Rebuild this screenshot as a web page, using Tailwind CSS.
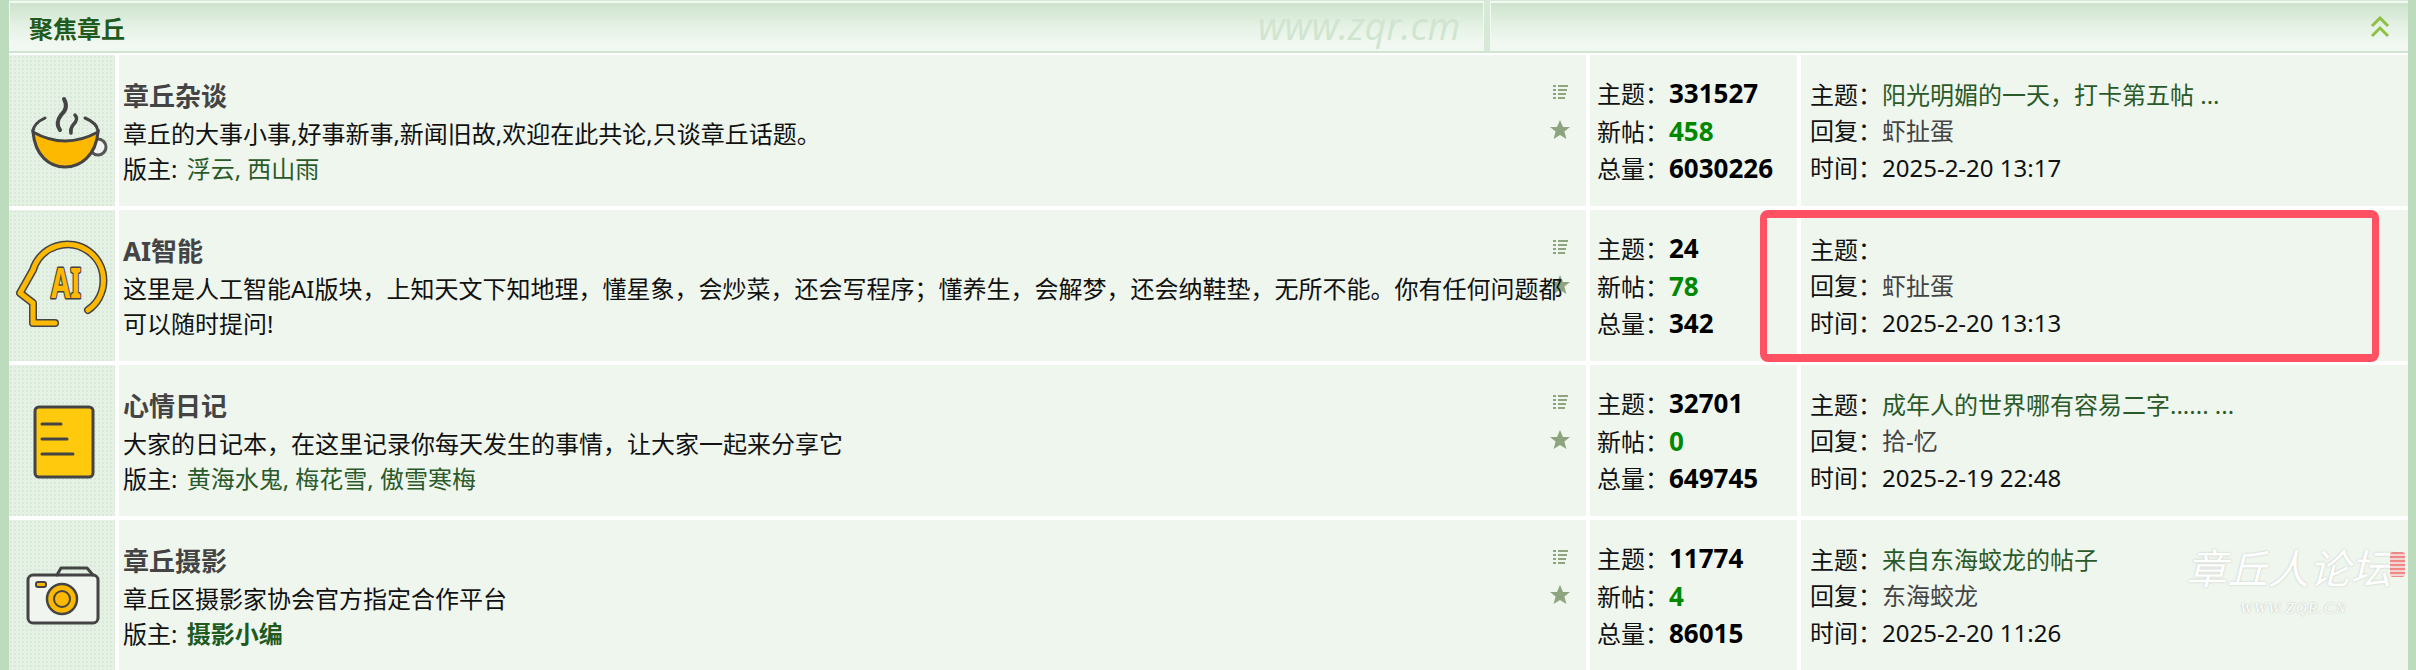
<!DOCTYPE html>
<html lang="zh-CN">
<head>
    <meta charset="UTF-8">
    <title>聚焦章丘</title>
    <script src="https://cdn.jsdelivr.net/npm/@tailwindcss/browser@4"></script>
</head>
<body class="bg-white">
<div class="relative h-[670px] w-[2416px] overflow-hidden border-x-[9px] border-r-[8px] border-[#BDDCBD] bg-white font-['Noto_Sans','Noto_Sans_CJK_SC',sans-serif] text-[24px] leading-[35px] text-[#111]">

    <!-- category header -->
    <div class="relative flex h-[53px] gap-[6px] border-b-2 border-[#CFE5CF] bg-[#D6E9D6] pt-[1px]">
        <div class="flex w-[1475px] items-center border-x border-t-2 border-[#F2F8F2] bg-[linear-gradient(#CFE4CF_5%,#E6F2E6_50%,#F1F8F1_85%)] pl-[19px] pt-[3px] text-[24px] font-bold text-[#1F5A1F]">聚焦章丘</div>
        <div class="flex flex-1 items-center justify-end border-l border-t-2 border-[#F2F8F2] bg-[linear-gradient(#CFE4CF_5%,#E6F2E6_50%,#F1F8F1_85%)] pr-[18px]">
            <svg width="20" height="22" viewBox="0 0 20 22" fill="none" stroke="#8DC044" stroke-width="3"><path d="M2 10 L10 2 L18 10"/><path d="M2 20 L10 12 L18 20"/></svg>
        </div>
        <div class="absolute left-[1249px] top-[6px] font-['Open_Sans',sans-serif] text-[37.500px] italic leading-[40px] text-[#CFE5CF]">www.zqr.cm</div>
    </div>

    <!-- 章丘杂谈 -->
    <div class="mt-[2px] flex h-[151px] gap-[4px]">
        <div class="w-[106px] bg-[#E5F1E5] bg-[radial-gradient(#D8E9D8_1.2px,transparent_1.2px)] [background-size:4px_4px]">
            <svg width="106" height="151" viewBox="0 0 106 151" fill="none" stroke-linecap="round">
                <circle cx="89" cy="92" r="8" stroke="#555" stroke-width="3" fill="#EEF5EE"/>
                <path d="M24 77 Q56 95 89 77 C87 100 72 112 56 112 C40 112 26 100 24 77 Z" fill="#FDB900" stroke="#444" stroke-width="3"/>
                <path d="M24 76 Q25 68 36 63 M76 63 Q88 68 89 76" stroke="#444" stroke-width="3"/>
                <path d="M55 44 Q60 53 52 60 Q46 68 51 75" stroke="#444" stroke-width="4"/>
                <path d="M66 60 Q70 64 64 70 Q61 74 62 78" stroke="#444" stroke-width="3.500"/>
            </svg>
        </div>
        <div class="relative flex w-[1467px] flex-col justify-center bg-[#EFF6EE] pl-[4px] pt-[2px]">
            <svg class="absolute left-[1434px] top-[29px]" width="15" height="16" viewBox="0 0 15 16" fill="#8FA580"><path d="M0 1h3v2H0zM5 1h10v2H5zM0 5h3v2H0zM5 5h9v2H5zM0 9h3v2H0zM5 9h8v2H5zM0 13h3v2H0zM5 13h7v2H5z"/></svg>
            <svg class="absolute left-[1430px] top-[64px]" width="22" height="22" viewBox="0 0 22 22" fill="#8DA47E"><path d="M11 1l3 7h7l-5.600 4.500 2 7.500L11 16l-6.400 4 2-7.500L1 8h7z"/></svg>
            <div class="relative mb-[2px] text-[26px] font-bold leading-[36px] text-[#444]">章丘杂谈</div>
            <div class="relative">章丘的大事小事,好事新事,新闻旧故,欢迎在此共论,只谈章丘话题。</div>
            <div class="relative">版主: <span class="ml-[3px] text-[#2A5A2A]">浮云, 西山雨</span></div>
        </div>
        <div class="flex w-[207px] flex-col justify-center bg-[#EFF6EE] pl-[7px] pt-[2px] leading-[36.500px]">
            <div>主题：<span class="text-[26px] font-bold text-black">331527</span></div>
            <div>新帖：<span class="text-[26px] font-bold text-[#008800]">458</span></div>
            <div>总量：<span class="text-[26px] font-bold text-black">6030226</span></div>
        </div>
        <div class="flex w-[607px] flex-col justify-center bg-[#EFF6EE] pl-[9px] pt-[2px] leading-[36.500px]">
            <div>主题：<span class="text-[#2A5A2A]">阳光明媚的一天，打卡第五帖 ...</span></div>
            <div>回复：<span class="text-[#444]">虾扯蛋</span></div>
            <div>时间：2025-2-20 13:17</div>
        </div>
    </div>

    <!-- AI智能 -->
    <div class="mt-[4px] flex h-[151px] gap-[4px]">
        <div class="w-[106px] bg-[#E5F1E5] bg-[radial-gradient(#D8E9D8_1.2px,transparent_1.2px)] [background-size:4px_4px]">
            <svg width="106" height="151" viewBox="0 0 106 151" fill="none" stroke-linecap="round" stroke-linejoin="round">
                <path d="M79 100 A36 36 0 1 0 24 60 L11 83 L24 93 L24 113 L46 113" stroke="#444" stroke-width="8"/>
                <path d="M79 100 A36 36 0 1 0 24 60 L11 83 L24 93 L24 113 L46 113" stroke="#FDB900" stroke-width="5"/>
                <text x="57" y="88" text-anchor="middle" font-family="Noto Sans" font-weight="700" font-size="42" textLength="30" lengthAdjust="spacingAndGlyphs" fill="#FDB900" stroke="#444" stroke-width="3" paint-order="stroke">AI</text>
            </svg>
        </div>
        <div class="relative flex w-[1467px] flex-col justify-center bg-[#EFF6EE] pl-[4px] pt-[2px]">
            <svg class="absolute left-[1434px] top-[29px]" width="15" height="16" viewBox="0 0 15 16" fill="#8FA580"><path d="M0 1h3v2H0zM5 1h10v2H5zM0 5h3v2H0zM5 5h9v2H5zM0 9h3v2H0zM5 9h8v2H5zM0 13h3v2H0zM5 13h7v2H5z"/></svg>
            <svg class="absolute left-[1430px] top-[64px]" width="22" height="22" viewBox="0 0 22 22" fill="#8DA47E"><path d="M11 1l3 7h7l-5.600 4.500 2 7.500L11 16l-6.400 4 2-7.500L1 8h7z"/></svg>
            <div class="relative mb-[2px] text-[26px] font-bold leading-[36px] text-[#444]">AI智能</div>
            <div class="relative">这里是人工智能AI版块，上知天文下知地理，懂星象，会炒菜，还会写程序；懂养生，会解梦，还会纳鞋垫，无所不能。你有任何问题都<br>可以随时提问!</div>
        </div>
        <div class="flex w-[207px] flex-col justify-center bg-[#EFF6EE] pl-[7px] pt-[2px] leading-[36.500px]">
            <div>主题：<span class="text-[26px] font-bold text-black">24</span></div>
            <div>新帖：<span class="text-[26px] font-bold text-[#008800]">78</span></div>
            <div>总量：<span class="text-[26px] font-bold text-black">342</span></div>
        </div>
        <div class="flex w-[607px] flex-col justify-center bg-[#EFF6EE] pl-[9px] pt-[2px] leading-[36.500px]">
            <div>主题：</div>
            <div>回复：<span class="text-[#444]">虾扯蛋</span></div>
            <div>时间：2025-2-20 13:13</div>
        </div>
    </div>

    <!-- 心情日记 -->
    <div class="mt-[4px] flex h-[151px] gap-[4px]">
        <div class="w-[106px] bg-[#E5F1E5] bg-[radial-gradient(#D8E9D8_1.2px,transparent_1.2px)] [background-size:4px_4px]">
            <svg width="106" height="151" viewBox="0 0 106 151" fill="none" stroke-linecap="round">
                <rect x="26" y="42" width="58" height="70" rx="4" fill="#FFC90E" stroke="#444" stroke-width="3"/>
                <path d="M33 59H52M33 74H58M33 89H64" stroke="#444" stroke-width="3"/>
            </svg>
        </div>
        <div class="relative flex w-[1467px] flex-col justify-center bg-[#EFF6EE] pl-[4px] pt-[2px]">
            <svg class="absolute left-[1434px] top-[29px]" width="15" height="16" viewBox="0 0 15 16" fill="#8FA580"><path d="M0 1h3v2H0zM5 1h10v2H5zM0 5h3v2H0zM5 5h9v2H5zM0 9h3v2H0zM5 9h8v2H5zM0 13h3v2H0zM5 13h7v2H5z"/></svg>
            <svg class="absolute left-[1430px] top-[64px]" width="22" height="22" viewBox="0 0 22 22" fill="#8DA47E"><path d="M11 1l3 7h7l-5.600 4.500 2 7.500L11 16l-6.400 4 2-7.500L1 8h7z"/></svg>
            <div class="relative mb-[2px] text-[26px] font-bold leading-[36px] text-[#444]">心情日记</div>
            <div class="relative">大家的日记本，在这里记录你每天发生的事情，让大家一起来分享它</div>
            <div class="relative">版主: <span class="ml-[3px] text-[#2A5A2A]">黄海水鬼, 梅花雪, 傲雪寒梅</span></div>
        </div>
        <div class="flex w-[207px] flex-col justify-center bg-[#EFF6EE] pl-[7px] pt-[2px] leading-[36.500px]">
            <div>主题：<span class="text-[26px] font-bold text-black">32701</span></div>
            <div>新帖：<span class="text-[26px] font-bold text-[#008800]">0</span></div>
            <div>总量：<span class="text-[26px] font-bold text-black">649745</span></div>
        </div>
        <div class="flex w-[607px] flex-col justify-center bg-[#EFF6EE] pl-[9px] pt-[2px] leading-[36.500px]">
            <div>主题：<span class="text-[#2A5A2A]">成年人的世界哪有容易二字...... ...</span></div>
            <div>回复：<span class="text-[#444]">拾-忆</span></div>
            <div>时间：2025-2-19 22:48</div>
        </div>
    </div>

    <!-- 章丘摄影 -->
    <div class="mt-[4px] flex h-[151px] gap-[4px]">
        <div class="w-[106px] bg-[#E5F1E5] bg-[radial-gradient(#D8E9D8_1.2px,transparent_1.2px)] [background-size:4px_4px]">
            <svg width="106" height="151" viewBox="0 0 106 151" fill="none" stroke-linecap="round" stroke-linejoin="round">
                <rect x="19" y="55" width="70" height="48" rx="5" fill="#F0F5F0" stroke="#444" stroke-width="3"/>
                <path d="M48 55 L52 48 H78 L84 55" stroke="#444" stroke-width="3"/>
                <rect x="27" y="62" width="10" height="5" rx="2" fill="#FDB900" stroke="#444" stroke-width="2"/>
                <circle cx="53" cy="79" r="15" fill="#FDB900" stroke="#444" stroke-width="2.500"/>
                <circle cx="53" cy="79" r="8" fill="#FDB900" stroke="#444" stroke-width="2"/>
            </svg>
        </div>
        <div class="relative flex w-[1467px] flex-col justify-center bg-[#EFF6EE] pl-[4px] pt-[2px]">
            <svg class="absolute left-[1434px] top-[29px]" width="15" height="16" viewBox="0 0 15 16" fill="#8FA580"><path d="M0 1h3v2H0zM5 1h10v2H5zM0 5h3v2H0zM5 5h9v2H5zM0 9h3v2H0zM5 9h8v2H5zM0 13h3v2H0zM5 13h7v2H5z"/></svg>
            <svg class="absolute left-[1430px] top-[64px]" width="22" height="22" viewBox="0 0 22 22" fill="#8DA47E"><path d="M11 1l3 7h7l-5.600 4.500 2 7.500L11 16l-6.400 4 2-7.500L1 8h7z"/></svg>
            <div class="relative mb-[2px] text-[26px] font-bold leading-[36px] text-[#444]">章丘摄影</div>
            <div class="relative">章丘区摄影家协会官方指定合作平台</div>
            <div class="relative">版主: <span class="ml-[3px] font-bold text-[#1F5A1F]">摄影小编</span></div>
        </div>
        <div class="flex w-[207px] flex-col justify-center bg-[#EFF6EE] pl-[7px] pt-[2px] leading-[36.500px]">
            <div>主题：<span class="text-[26px] font-bold text-black">11774</span></div>
            <div>新帖：<span class="text-[26px] font-bold text-[#008800]">4</span></div>
            <div>总量：<span class="text-[26px] font-bold text-black">86015</span></div>
        </div>
        <div class="flex w-[607px] flex-col justify-center bg-[#EFF6EE] pl-[9px] pt-[2px] leading-[36.500px]">
            <div>主题：<span class="text-[#2A5A2A]">来自东海蛟龙的帖子</span></div>
            <div>回复：<span class="text-[#444]">东海蛟龙</span></div>
            <div>时间：2025-2-20 11:26</div>
        </div>
    </div>

    <!-- image watermark, bottom right -->
    <div class="absolute left-[2177px] top-[544px] whitespace-nowrap text-[41px] italic leading-[48px] text-white [text-shadow:0_0_2px_#B5BDB5]">章丘人论坛</div>
    <div class="absolute left-[2231px] top-[599px] whitespace-nowrap font-['Liberation_Serif',serif] text-[15px] italic leading-[18px] tracking-[1.5px] text-white [text-shadow:0_0_2px_#A9B2A9]">WWW.ZQR.CN</div>
    <div class="absolute left-[2381px] top-[552px] h-[25px] w-[15px] rounded-[3px] bg-[repeating-linear-gradient(#EE5A5A_0_2px,#F7C6C6_2px_4px)] opacity-70"></div>

    <!-- red highlight box added on the screenshot -->
    <div class="absolute left-[1751px] top-[210px] h-[152px] w-[619px] rounded-[8px] border-x-[7px] border-y-[8px] border-[#FF5064]"></div>
</div>
</body>
</html>
